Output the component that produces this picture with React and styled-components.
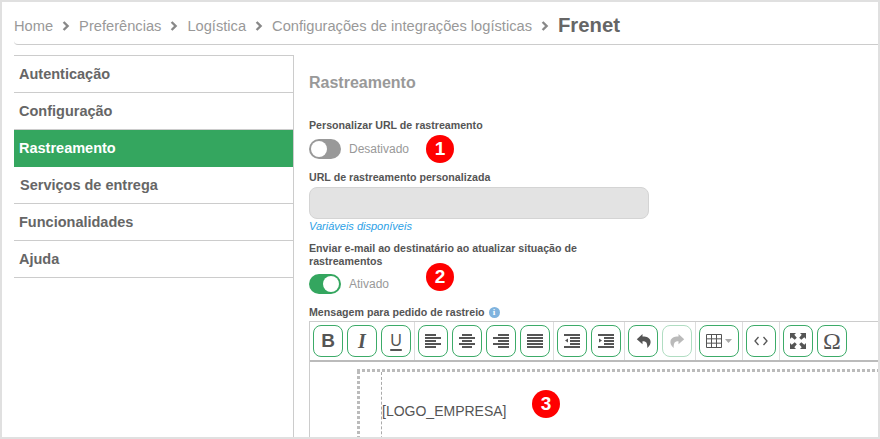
import React from "react";
import styled, { createGlobalStyle } from "styled-components";

const Global = createGlobalStyle`
  html, body { margin: 0; padding: 0; background: #fff; }
  * { box-sizing: border-box; }
  body { font-family: "Liberation Sans", Arial, sans-serif; }
`;

const Page = styled.div`
  position: relative;
  width: 880px;
  height: 439px;
  border: 2px solid #e0e0e0;
  overflow: hidden;
  background: #fff;
  color: #555;
`;

const Breadcrumb = styled.nav`
  display: flex;
  align-items: center;
  height: 43px;
  margin-left: 12px;
  padding-top: 5px;
  border-bottom: 1px solid #ccc;
  border-bottom-left-radius: 4px;
  font-size: 14.66px;
  color: #999;
`;

const Crumb = styled.span`
  white-space: nowrap;
`;

const CurrentCrumb = styled.span`
  font-size: 20.3px;
  font-weight: 700;
  color: #666;
  white-space: nowrap;
`;

const ChevronSvg = styled.svg`
  width: 8px;
  height: 10px;
  margin: 0 9px 0 9px;
  flex: none;
`;

const Chevron = () => (
  <ChevronSvg viewBox="0 0 8 10">
    <path d="M1.6 1 5.6 5 1.6 9" fill="none" stroke="#888" strokeWidth="2.4" />
  </ChevronSvg>
);

const Body = styled.div`
  display: flex;
  height: 392px;
  margin-top: 10px;
`;

const Sidebar = styled.ul`
  flex: none;
  width: 280px;
  margin: 0 0 0 12px;
  padding: 0;
  list-style: none;
  border-top: 1px solid #ccc;
  border-right: 1px solid #ccc;
`;

const MenuItem = styled.li`
  display: flex;
  align-items: center;
  height: 37px;
  padding-left: ${(p) => p.$indent || 5}px;
  border-bottom: 1px solid ${(p) => (p.$active ? "#34a65f" : "#ccc")};
  background: ${(p) => (p.$active ? "#34a65f" : "transparent")};
  color: ${(p) => (p.$active ? "#fff" : "#666")};
  font-size: 14.5px;
  font-weight: 700;
`;

const Content = styled.main`
  flex: 1;
  min-width: 0;
  padding: 17px 0 0 15px;
`;

const Heading = styled.h2`
  margin: 0 0 25px;
  font-size: 16px;
  line-height: 22px;
  font-weight: 700;
  color: #999;
`;

const Label = styled.div`
  width: 310px;
  font-size: 10.65px;
  line-height: 13px;
  font-weight: 700;
  color: #555;
`;

const ToggleRow = styled.div`
  display: flex;
  align-items: center;
  gap: 8px;
  height: 20px;
  margin: ${(p) => p.$top}px 0 ${(p) => p.$bottom}px;
  font-size: 12px;
  color: #999;
`;

const Toggle = styled.span`
  display: flex;
  justify-content: ${(p) => (p.$on ? "flex-end" : "flex-start")};
  width: 32px;
  height: 20px;
  padding: 2px;
  border-radius: 10px;
  background: ${(p) => (p.$on ? "#34a65f" : "#999")};
`;

const Knob = styled.span`
  width: 16px;
  height: 16px;
  border-radius: 50%;
  background: #fff;
`;

const UrlInput = styled.div`
  width: 340px;
  height: 32px;
  margin-top: 3px;
  border: 1px solid #d4d4d4;
  border-radius: 8px;
  background: #e3e3e3;
`;

const HelpLink = styled.a`
  display: block;
  height: 14px;
  margin: 0 0 9px;
  font-size: 11px;
  line-height: 14px;
  font-style: italic;
  color: #2aa0e6;
`;

const EditorLabel = styled(Label)`
  display: flex;
  align-items: center;
  gap: 4px;
`;

const InfoDot = styled.span`
  display: inline-flex;
  align-items: center;
  justify-content: center;
  width: 11px;
  height: 11px;
  border-radius: 50%;
  background: #7fb3de;
  color: #fff;
  font-size: 9px;
  line-height: 11px;
  font-family: "Liberation Serif", serif;
`;

const Editor = styled.div`
  width: 569px;
  height: 120px;
  margin-top: 2px;
  border-left: 1px solid #ccc;
  border-top: 1px solid #ccc;
`;

const Toolbar = styled.div`
  display: flex;
  height: 40px;
  padding-left: 3px;
  border-bottom: 2px solid #bbb;
`;

const Group = styled.div`
  display: flex;
  gap: 4px;
  height: 38px;
  padding: 3px 3px 0 0;
  margin-right: 3px;
  border-right: ${(p) => (p.$last ? "none" : "1px solid #ddd")};
`;

const ToolButton = styled.span`
  display: flex;
  align-items: center;
  justify-content: center;
  gap: 3px;
  width: ${(p) => p.$width || 30}px;
  height: 32px;
  border: 1px solid #3cab68;
  border-radius: 8px;
  background: #fff;
  color: #555;
  opacity: ${(p) => (p.$disabled ? 0.4 : 1)};
  font-size: ${(p) => p.$size || 16}px;
  font-weight: ${(p) => p.$weight || 400};
  font-style: ${(p) => (p.$italic ? "italic" : "normal")};
  font-family: ${(p) => (p.$serif ? '"Liberation Serif", serif' : '"Liberation Sans", sans-serif')};
  text-decoration: ${(p) => (p.$underline ? "underline" : "none")};
  text-underline-offset: 3px;
  text-decoration-thickness: 2px;
`;

const Canvas = styled.div`
  padding: 7px 0 0 47px;
`;

const LayoutTable = styled.div`
  display: flex;
  height: 90px;
  padding: 3px 0 0 3px;
  background:
    repeating-linear-gradient(90deg, #bbb 0 3px, transparent 3px 5px) top left / 100% 3px no-repeat,
    repeating-linear-gradient(0deg, #bbb 0 3px, transparent 3px 5px) top left / 3px 100% no-repeat;
`;

const LayoutCell = styled.div`
  margin-left: 21px;
  padding-top: 30px;
  border-left: 1px dashed #aaa;
  font-size: 14px;
  line-height: 18px;
  color: #555;
`;

const Badge = styled.span`
  position: absolute;
  left: ${(p) => p.$x}px;
  top: ${(p) => p.$y}px;
  display: flex;
  align-items: center;
  justify-content: center;
  width: 28px;
  height: 28px;
  border-radius: 50%;
  background: #f00;
  color: #fff;
  font-size: 19px;
  font-weight: 700;
`;

const Lines = ({ rows }) => (
  <svg width="16" height="16" viewBox="0 0 16 16" fill="#555">
    {rows.map(([x, w], i) => (
      <rect key={i} x={x} y={1 + i * 3} width={w} height="2" />
    ))}
  </svg>
);

const Indent = ({ flip }) => (
  <svg width="16" height="16" viewBox="0 0 16 16" fill="#555">
    <rect x="0" y="1" width="16" height="2" />
    <rect x="6" y="4" width="10" height="2" />
    <rect x="6" y="7" width="10" height="2" />
    <rect x="6" y="10" width="10" height="2" />
    <rect x="0" y="13" width="16" height="2" />
    <path d={flip ? "M1 5.500v4l3-2z" : "M4 5.500v4l-3-2z"} />
  </svg>
);

const Arrow = ({ color, flip }) => (
  <svg width="15" height="16" viewBox="0 0 15 16" style={flip ? { transform: "scaleX(-1)" } : undefined}>
    <path d="M6.500 1 .8 6.200l5.700 5V8.200c3.600 0 5 1.400 4.800 6.800C14 12.800 15 10.500 14.500 8 13.800 4.800 10.500 3.500 6.500 3.600z" fill={color} />
  </svg>
);

const TableIcon = () => (
  <svg width="16" height="14" viewBox="0 0 16 14" fill="none" stroke="#555" strokeWidth="1">
    <path d="M.5.5h15v13H.5zM.5 4.830h15M.5 9.170h15M5.500.5v13M10.500.5v13" />
  </svg>
);

const Caret = () => (
  <svg width="7" height="4" viewBox="0 0 7 4">
    <path d="M0 0h7L3.500 4z" fill="#aaa" />
  </svg>
);

const CodeIcon = () => (
  <svg width="14" height="10" viewBox="0 0 14 10" fill="none" stroke="#555" strokeWidth="1.300">
    <path d="M4.500 1 1 5l3.500 4M9.500 1 13 5 9.500 9" />
  </svg>
);

const FullIcon = () => (
  <svg width="16" height="16" viewBox="0 0 16 16" fill="#555">
    <path d="M0 0h6L4.300 1.700 6.800 4.700 4.700 6.800 1.700 4.300 0 6zM16 0v6L14.300 4.300 11.300 6.800 9.200 4.700 11.700 1.700 10 0zM0 16v-6l1.700 1.700 3-2.500 2.100 2.100-2.500 3L6 16zM16 16h-6l1.700-1.700-2.500-3 2.100-2.100 3 2.500L16 10z" />
  </svg>
);

const alignments = [
  [[0, 11], [0, 16], [0, 11], [0, 16], [0, 11]],
  [[3, 10], [0, 16], [3, 10], [0, 16], [3, 10]],
  [[5, 11], [0, 16], [5, 11], [0, 16], [5, 11]],
  [[0, 16], [0, 16], [0, 16], [0, 16], [0, 16]],
];

const menu = [
  { label: "Autenticação" },
  { label: "Configuração" },
  { label: "Rastreamento", active: true },
  { label: "Serviços de entrega", indent: 6 },
  { label: "Funcionalidades" },
  { label: "Ajuda" },
];

export default function App() {
  return (
    <>
      <Global />
      <Page>
        <Breadcrumb>
          <Crumb>Home</Crumb>
          <Chevron />
          <Crumb>Preferências</Crumb>
          <Chevron />
          <Crumb>Logística</Crumb>
          <Chevron />
          <Crumb>Configurações de integrações logísticas</Crumb>
          <Chevron />
          <CurrentCrumb>Frenet</CurrentCrumb>
        </Breadcrumb>
        <Body>
          <Sidebar>
            {menu.map((m) => (
              <MenuItem key={m.label} $active={m.active} $indent={m.indent}>
                {m.label}
              </MenuItem>
            ))}
          </Sidebar>
          <Content>
            <Heading>Rastreamento</Heading>
            <Label>Personalizar URL de rastreamento</Label>
            <ToggleRow $top={7} $bottom={12}>
              <Toggle><Knob /></Toggle>
              Desativado
            </ToggleRow>
            <Label>URL de rastreamento personalizada</Label>
            <UrlInput />
            <HelpLink>Variáveis disponíveis</HelpLink>
            <Label>Enviar e-mail ao destinatário ao atualizar situação de rastreamentos</Label>
            <ToggleRow $top={6} $bottom={12}>
              <Toggle $on><Knob /></Toggle>
              Ativado
            </ToggleRow>
            <EditorLabel>
              Mensagem para pedido de rastreio <InfoDot>i</InfoDot>
            </EditorLabel>
            <Editor>
              <Toolbar>
                <Group>
                  <ToolButton $size={19} $weight={700}>B</ToolButton>
                  <ToolButton $size={20} $weight={700} $italic $serif>I</ToolButton>
                  <ToolButton $size={16} $underline>U</ToolButton>
                </Group>
                <Group>
                  {alignments.map((rows, i) => (
                    <ToolButton key={i}><Lines rows={rows} /></ToolButton>
                  ))}
                </Group>
                <Group>
                  <ToolButton><Indent /></ToolButton>
                  <ToolButton><Indent flip /></ToolButton>
                </Group>
                <Group>
                  <ToolButton><Arrow color="#555" /></ToolButton>
                  <ToolButton $disabled><Arrow color="#555" flip /></ToolButton>
                </Group>
                <Group>
                  <ToolButton $width={40}><TableIcon /><Caret /></ToolButton>
                </Group>
                <Group>
                  <ToolButton><CodeIcon /></ToolButton>
                </Group>
                <Group $last>
                  <ToolButton><FullIcon /></ToolButton>
                  <ToolButton $size={24} $serif>Ω</ToolButton>
                </Group>
              </Toolbar>
              <Canvas>
                <LayoutTable>
                  <LayoutCell>[LOGO_EMPRESA]</LayoutCell>
                </LayoutTable>
              </Canvas>
            </Editor>
          </Content>
        </Body>
        <Badge $x={424} $y={133}>1</Badge>
        <Badge $x={424} $y={261}>2</Badge>
        <Badge $x={530} $y={388}>3</Badge>
      </Page>
    </>
  );
}
